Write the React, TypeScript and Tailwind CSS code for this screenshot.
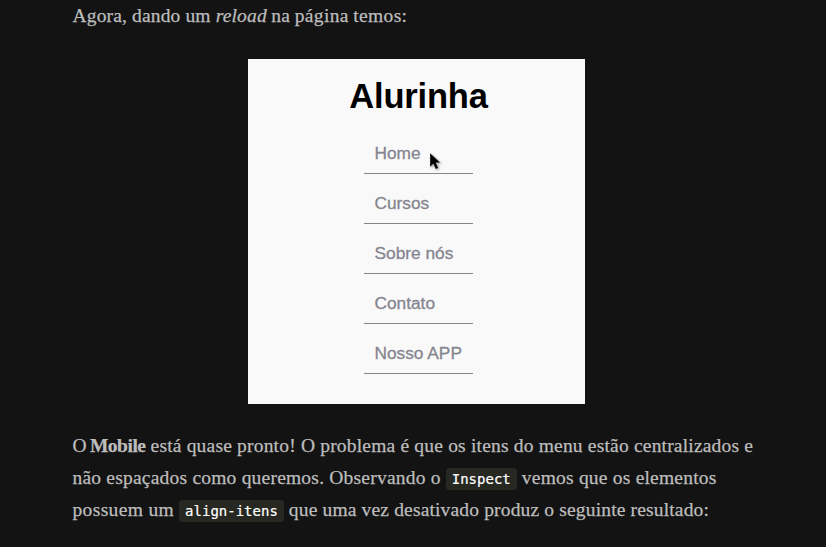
const items = ["Home", "Cursos", "Sobre nós", "Contato", "Nosso APP"];

function Code({ children }: { children: string }) {
  return (
    <code className="inline-block h-[22px] rounded-[3px] bg-[#272822] px-[6px] align-baseline font-['DejaVu_Sans_Mono',monospace] text-[14px] leading-[22px] tracking-normal text-white [-webkit-text-stroke:0.2px_white]">
      {children}
    </code>
  );
}

function MobileMenu() {
  return (
    <figure className="relative mt-[27px] ml-[248px] flex h-[345px] w-[337px] flex-col items-center bg-[#f9f9f9] pl-[4px] font-['Liberation_Sans',Arial,sans-serif] [-webkit-text-stroke:0]">
      <h1 className="mt-[17px] text-[34.5px] leading-[40px] font-bold tracking-[-0.2px] text-black">Alurinha</h1>
      <ul className="mt-[8px] w-[109px] text-[17.3px] text-[#85858f] [-webkit-text-stroke:0.3px_#85858f]">
        {items.map((item) => (
          <li key={item} className="flex h-[50px] items-end border-b border-[#85858a] pb-[9px] pl-[10.5px] leading-[22px] whitespace-nowrap">
            {item}
          </li>
        ))}
      </ul>
      <svg className="absolute top-[93px] left-[181px] drop-shadow-[1px_1px_1px_rgba(0,0,0,.35)]" width="12" height="20" viewBox="0 0 12 20">
        <path d="M1 1v14l3.3-3.1 2.4 5.4 2.7-1.2L7 10.8h4.5z" fill="#000" stroke="#fff" strokeWidth=".3" />
      </svg>
    </figure>
  );
}

export default function App() {
  return (
    <main className="h-[547px] overflow-hidden bg-[#131313] font-['Liberation_Serif',serif] text-[19.5px] leading-[32px] whitespace-nowrap text-[#bdbdbd] [-webkit-text-stroke:0.25px_#bdbdbd]">
      <p className="h-[32px] pl-[72.5px]">
        <span className="tracking-[0.15px]">Agora, dando um </span><em className="tracking-[0.15px]">reload</em><span className="tracking-[0.35px] [word-spacing:-0.8px]"> na página temos:</span>
      </p>
      <MobileMenu />
      <p className="mt-[26px] pl-[72.5px]">
        <span className="block h-[32px] tracking-[0.19px]"><span className="tracking-normal [word-spacing:-1.5px]">O <strong className="tracking-[-0.5px]">Mobile</strong></span> está quase pronto! O problema é que os itens do menu estão centralizados e</span>
        <span className="block h-[32px] tracking-[0.21px]">não espaçados como queremos. Observando o <Code>Inspect</Code> vemos que os elementos</span>
        <span className="block h-[32px] tracking-[0.16px]"><span className="tracking-[0.35px]">possuem um</span> <Code>align-itens</Code> que uma vez desativado produz o seguinte resultado:</span>
      </p>
    </main>
  );
}
